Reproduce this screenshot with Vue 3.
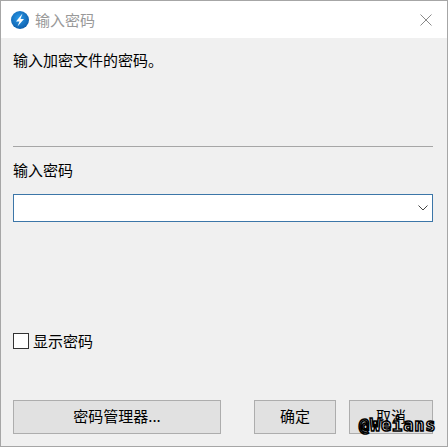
<script setup>
const title = '输入密码'
</script>

<template>
  <div class="window">
    <header class="titlebar">
      <svg class="logo" width="18" height="18" viewBox="0 0 18 18">
        <defs>
          <radialGradient id="logoFill" cx="45%" cy="40%" r="65%">
            <stop offset="0" stop-color="#2a9bea" />
            <stop offset="1" stop-color="#0c5ba8" />
          </radialGradient>
        </defs>
        <circle cx="9" cy="9" r="9" fill="url(#logoFill)" />
        <path d="M11.500 2.500 5 10.500h3.500L6.500 15.500 13 8H9.500z" fill="#fff" />
      </svg>
      <span class="title">{{ title }}</span>
      <svg class="close" width="12" height="12" viewBox="0 0 12 12">
        <path d="M.5.5l11 11M11.500.5l-11 11" stroke="#8a8a8a" fill="none" />
      </svg>
    </header>
    <main class="body">
      <p class="desc">输入加密文件的密码。</p>
      <hr class="rule" />
      <label class="label">输入密码</label>
      <div class="combo">
        <svg width="10" height="6" viewBox="0 0 10 6">
          <path d="M.5.5 5 5 9.500.5" stroke="#444" fill="none" />
        </svg>
      </div>
      <label class="check"><span class="box"></span>显示密码</label>
      <div class="actions">
        <button class="btn manager">密码管理器...</button>
        <button class="btn ok">确定</button>
        <div class="cancel-wrap">
          <button class="btn cancel">取消</button>
          <span class="mark">@Weians</span>
        </div>
      </div>
    </main>
  </div>
</template>

<style scoped>
.window {
  width: 448px;
  height: 447px;
  box-sizing: border-box;
  border: 1px solid #a6a6a6;
  background: #f0f0f0;
  display: flex;
  flex-direction: column;
  font-family: "Noto Sans CJK SC", sans-serif;
  font-size: 15px;
  color: #000;
  overflow: hidden;
}
.titlebar {
  height: 37px;
  flex: none;
  background: #fff;
  display: flex;
  align-items: center;
  padding: 0 15px 0 10px;
}
.logo { flex: none; }
.title {
  margin-left: 6px;
  color: #999;
  flex: 1;
}
.close { flex: none; }
.body {
  flex: 1;
  display: flex;
  flex-direction: column;
  padding: 0 14px 0 12px;
}
.desc {
  margin: 12px 0 0;
  line-height: 20px;
  height: 20px;
}
.rule {
  margin: 76px 0 0;
  border: 0;
  height: 1px;
  background: #a6a6a6;
}
.label {
  margin-top: 13px;
  line-height: 20px;
  height: 20px;
}
.combo {
  margin-top: 14px;
  height: 28px;
  box-sizing: border-box;
  background: #fff;
  border: 1px solid #3c76a8;
  display: flex;
  align-items: center;
  justify-content: flex-end;
  padding-right: 4px;
}
.check {
  margin-top: 109px;
  display: flex;
  align-items: center;
  height: 20px;
  line-height: 20px;
}
.box {
  width: 16px;
  height: 16px;
  box-sizing: border-box;
  background: #fff;
  border: 1px solid #333;
  margin-right: 4px;
}
.actions {
  margin-top: 49px;
  display: flex;
}
.btn {
  height: 34px;
  box-sizing: border-box;
  background: #e1e1e1;
  border: 1px solid #adadad;
  font: inherit;
  line-height: 30px;
  color: #000;
  padding: 0 0 4px;
}
.manager { width: 208px; }
.ok { width: 82px; margin-left: 33px; }
.cancel-wrap {
  position: relative;
  margin-left: 13px;
}
.cancel { width: 84px; }
.mark {
  position: absolute;
  left: 10px;
  top: 15px;
  font-family: "DejaVu Sans Mono", monospace;
  font-weight: 700;
  font-size: 17px;
  line-height: 20px;
  letter-spacing: 0.800px;
  color: #fff;
  -webkit-text-stroke: 1.500px #000;
  white-space: nowrap;
}
</style>
